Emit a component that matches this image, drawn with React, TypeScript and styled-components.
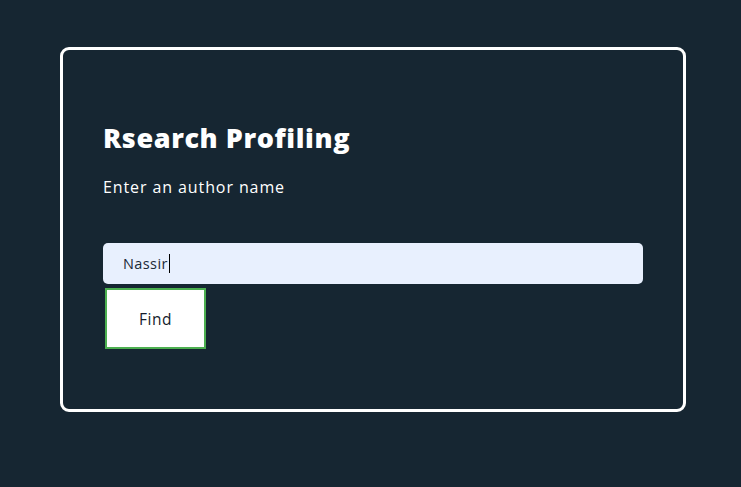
import React from "react";
import styled, { createGlobalStyle } from "styled-components";

const Global = createGlobalStyle`
  html, body { margin: 0; padding: 0; background: #162632; }
  body { font-family: "Open Sans", "Noto Sans", sans-serif; }
  * { box-sizing: border-box; }
`;

const Page = styled.div`
  min-height: 487px;
  padding: 47px 55px 0 60px;
`;

const Card = styled.section`
  width: 626px;
  height: 365px;
  border: 3px solid #ffffff;
  border-radius: 9px;
  padding: 70px 40px 0 40px;
  display: flex;
  flex-direction: column;
`;

const Title = styled.h1`
  margin: 0;
  color: #ffffff;
  font-family: "Open Sans", sans-serif;
  font-weight: 800;
  font-size: 27px;
  line-height: 36px;
  letter-spacing: 0.6px;
`;

const Subtitle = styled.p`
  margin: 20px 0 0 0;
  color: #ffffff;
  font-size: 16px;
  line-height: 22px;
  font-weight: 400;
  letter-spacing: 0.9px;
`;

const Form = styled.form`
  margin-top: 45px;
  display: flex;
  flex-direction: column;
  align-items: flex-start;
  gap: 4px;
`;

const InputBox = styled.div`
  width: 540px;
  height: 41px;
  border-radius: 5px;
  background: #e8f0fe;
  padding: 0 20px;
  display: flex;
  align-items: center;
  font-family: "Open Sans", sans-serif;
  font-size: 14.5px;
  letter-spacing: 0.4px;
  color: #1b2a38;
`;

const Caret = styled.span`
  display: inline-block;
  width: 1px;
  height: 19px;
  margin-left: 1px;
  background: #000000;
`;

const Button = styled.button`
  margin-left: 2px;
  width: 101px;
  height: 61px;
  background: #ffffff;
  border: 2px solid #4caf50;
  font-family: "Open Sans", sans-serif;
  font-size: 15.5px;
  letter-spacing: 0.5px;
  color: #141c2c;
  cursor: pointer;
`;

export default function App() {
  return (
    <>
      <Global />
      <Page>
        <Card>
          <Title>Rsearch Profiling</Title>
          <Subtitle>Enter an author name</Subtitle>
          <Form onSubmit={(e) => e.preventDefault()}>
            <InputBox role="textbox" aria-label="author name">
              Nassir
              <Caret />
            </InputBox>
            <Button type="submit">Find</Button>
          </Form>
        </Card>
      </Page>
    </>
  );
}
